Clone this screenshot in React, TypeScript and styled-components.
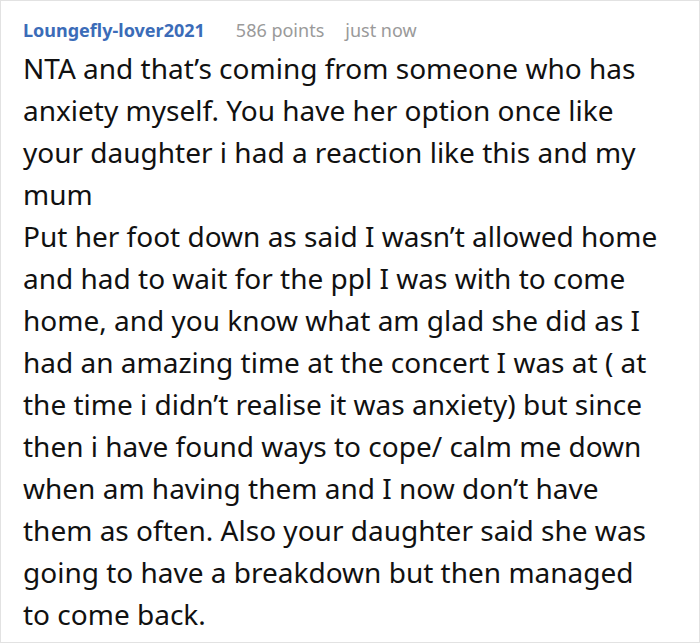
import styled, { createGlobalStyle } from 'styled-components';

const GlobalStyle = createGlobalStyle`
  html, body {
    margin: 0;
    padding: 0;
    background: #ffffff;
  }
  * {
    box-sizing: border-box;
  }
`;

const comment = {
  author: 'Loungefly-lover2021',
  points: 586,
  time: 'just now',
  paragraphs: [
    'NTA and that’s coming from someone who has anxiety myself. You have her option once like your daughter i had a reaction like this and my mum',
    'Put her foot down as said I wasn’t allowed home and had to wait for the ppl I was with to come home, and you know what am glad she did as I had an amazing time at the concert I was at ( at the time i didn’t realise it was anxiety) but since then i have found ways to cope/ calm me down when am having them and I now don’t have them as often. Also your daughter said she was going to have a breakdown but then managed to come back.',
  ],
};

const App = () => {
  return (
    <>
      <GlobalStyle />
      <CommentCard>
        <MetaRow>
          <Author>{comment.author}</Author>
          <Points>{comment.points} points</Points>
          <Time>{comment.time}</Time>
        </MetaRow>
        <Body>
          {comment.paragraphs.map((p, i) => (
            <Paragraph key={i}>{p}</Paragraph>
          ))}
        </Body>
      </CommentCard>
    </>
  );
};

const CommentCard = styled.div`
  width: 700px;
  height: 643px;
  border: 1px solid #e2e2e2;
  padding: 16px 34px 0 22px;
  font-family: 'Noto Sans', 'Open Sans', sans-serif;
  overflow: hidden;
`;

const MetaRow = styled.div`
  display: flex;
  align-items: baseline;
  font-size: 18px;
  line-height: 26px;
  margin-bottom: 4px;
`;

const Author = styled.span`
  color: #3b6cb8;
  font-weight: 700;
  margin-right: 31px;
`;

const Points = styled.span`
  color: #9a9a9a;
  margin-right: 21px;
`;

const Time = styled.span`
  color: #9a9a9a;
`;

const Body = styled.div`
  font-size: 28px;
  line-height: 42px;
  color: #111111;
`;

const Paragraph = styled.p`
  margin: 0;
`;

export default App;
